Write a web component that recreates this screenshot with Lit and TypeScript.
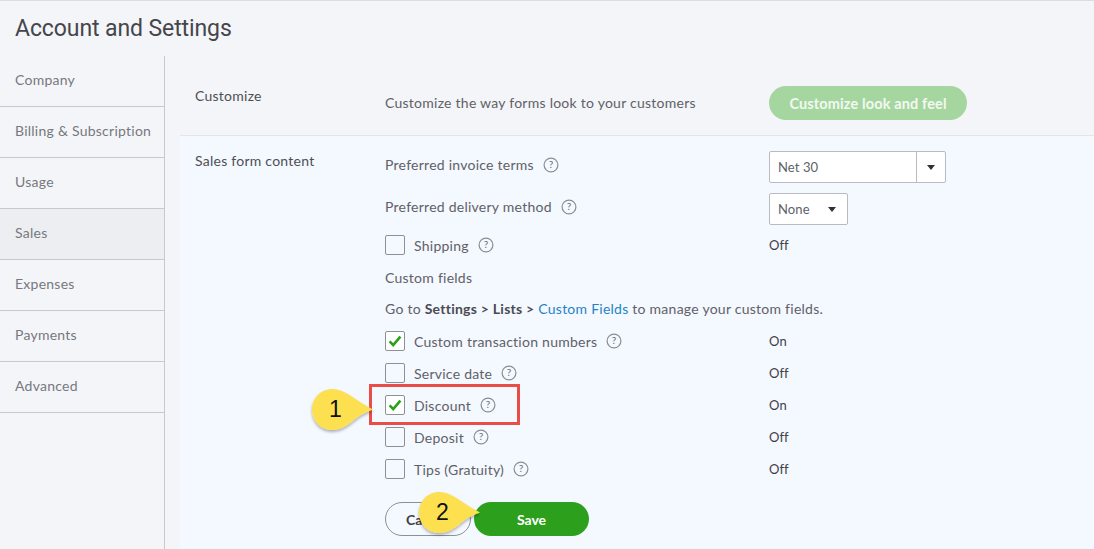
import { LitElement, html, css, svg } from "lit";
import { customElement } from "lit/decorators.js";

const nav = ["Company", "Billing & Subscription", "Usage", "Sales", "Expenses", "Payments", "Advanced"];

const help = html`<svg class="help" width="16" height="16" viewBox="0 0 16 16"><circle cx="8" cy="8" r="6.9" fill="none" stroke="#8b8e90" stroke-width="1.2"/><text x="8" y="11.4" text-anchor="middle" font-family="Lato, sans-serif" font-size="10" fill="#6b6c72">?</text></svg>`;

const callout = (n: string, cls: string) => html`<div class="callout ${cls}">
  <svg width="74" height="52" viewBox="0 0 74 52">
    <defs><filter id="s${n}" x="-20%" y="-20%" width="140%" height="150%"><feDropShadow dx="0" dy="2" stdDeviation="1.6" flood-color="#000" flood-opacity=".3"/></filter></defs>
    ${svg`<path d="M23 3 C31 3 38 7 45 12 C51 16 57 20 64 23.5 C57 26 51 29 45 34 C38 40 31 44 23 44 C12 44 3 35 3 23.5 C3 12 12 3 23 3 Z" fill="#fde04f" filter="url(#s${n})"/>`}
  </svg>
  <span>${n}</span>
</div>`;

@customElement("app-root")
export class AppRoot extends LitElement {
  static styles = css`
    :host { display: block; width: 1094px; height: 549px; overflow: hidden; background: #f4f5f8; font-family: Lato, "Open Sans", sans-serif; color: #4a4b52; font-size: 14px; position: relative; border-top: 1px solid #dcdde1; box-sizing: border-box; letter-spacing: .25px; }
    h1 { margin: 0; height: 55px; box-sizing: border-box; padding: 13px 0 0 15px; font: 400 23px/30px Roboto, sans-serif; letter-spacing: -.1px; color: #45464b; }
    .body { display: flex; height: 493px; }
    .side { width: 165px; flex: none; border-right: 1px solid #c8c9cc; box-sizing: border-box; }
    .side div { height: 51px; box-sizing: border-box; border-bottom: 1px solid #c8c9cc; padding: 0 0 3px 15px; display: flex; align-items: center; color: #77787e; }
    .side div.on { background: #eceef2; }
    .main { flex: 1; display: flex; flex-direction: column; padding-left: 15px; }
    .top { height: 79px; flex: none; display: grid; grid-template-columns: 205px 384px auto; border-bottom: 1px solid #e3e6e9; }
    .lab { padding-left: 15px; color: #4e4f55; }
    .top .lab { padding-top: 31px; line-height: 18px; }
    .top .desc { padding-top: 38px; line-height: 18px; color: #606167; }
    .cta { margin-top: 30px; width: 198px; height: 34px; border-radius: 17px; background: #a6d6a0; color: #f2f8f2; font-weight: 700; display: flex; align-items: center; justify-content: center; letter-spacing: .13px; font-size: 14.5px; box-sizing: border-box; }
    .sales { flex: 1; background: #f4f8ff; display: grid; grid-template-columns: 205px 384px 1fr; grid-auto-rows: max-content; }
    .sales > .lab { padding-top: 16px; line-height: 18px; grid-row: 1 / 20; }
    .rowl { display: flex; align-items: center; color: #606167; white-space: nowrap; grid-column: 2; box-sizing: border-box; }
    .rowr { display: flex; align-items: center; grid-column: 3; color: #3f4045; font-size: 13px; letter-spacing: .1px; box-sizing: border-box; }
    .help { margin-left: 9px; flex: none; }
    .box { width: 20px; height: 20px; box-sizing: border-box; border: 1px solid #8d9096; border-radius: 2px; margin-right: 9px; flex: none; display: flex; align-items: center; justify-content: center; }
    .box.chk { background: #fff; }
    .r1 { height: 57px; }
    .r1r { height: 57px; padding-top: 15px; align-items: flex-start; }
    .r2 { height: 33px; padding-bottom: 6px; }
    .r2r { height: 33px; align-items: flex-start; }
    .r3 { height: 40px; padding-bottom: 2px; }
    .r4 { height: 24px; grid-column: 2 / 4; padding-bottom: 2px; }
    .r5 { height: 35px; padding-top: 1px; grid-column: 2 / 4; }
    .h32 { height: 32px; }
    .sel { display: flex; background: #fff; border: 1px solid #b8bcc2; border-radius: 2px; height: 32px; box-sizing: border-box; align-items: center; font-size: 13px; color: #606167; }
    .sel .v { padding-left: 8px; }
    .net { width: 177px; }
    .net .v { width: 147px; height: 100%; display: flex; align-items: center; border-right: 1px solid #b8bcc2; box-sizing: border-box; }
    .net .a { flex: 1; display: flex; justify-content: center; }
    .none { width: 79px; justify-content: space-between; padding-right: 11px; }
    .tri { width: 0; height: 0; border-left: 4px solid transparent; border-right: 4px solid transparent; border-top: 5px solid #303136; }
    b { font-weight: 700; color: #4a4b52; }
    a { color: #1f84c6; text-decoration: none; }
    .btns { grid-column: 2; display: flex; margin-top: 17px; }
    .cancel { width: 86px; height: 34px; border: 1px solid #8d9096; border-radius: 17px; box-sizing: border-box; display: flex; align-items: center; padding-left: 20px; color: #3f4045; font-weight: 700; letter-spacing: 0; }
    .save { width: 115px; height: 34px; margin-left: 3px; border-radius: 17px; background: #2ca01c; color: #fff; font-weight: 700; display: flex; align-items: center; justify-content: center; letter-spacing: 0; }
    .red { position: absolute; left: 369px; top: 383px; width: 151px; height: 41px; box-sizing: border-box; border: 3px solid #ea4c48; }
    .callout { position: absolute; width: 74px; height: 52px; }
    .callout span { position: absolute; top: 7px; left: 3px; width: 47px; text-align: center; font: 400 23px/32px "Liberation Sans", sans-serif; color: #111; letter-spacing: 0; }
    .c1 { left: 309px; top: 385px; }
    .c2 { left: 416px; top: 488px; }
  `;

  check() {
    return html`<svg width="14" height="12" viewBox="0 0 14 12"><path d="M1.6 6.4 L5.2 10 L12.4 1.6" fill="none" stroke="#2ca01c" stroke-width="2.6"/></svg>`;
  }

  cb(label: string, state: string, on = false, cls = "h32") {
    return html`<div class="rowl ${cls}"><span class="box ${on ? "chk" : ""}">${on ? this.check() : ""}</span>${label}${help}</div><div class="rowr ${cls}">${state}</div>`;
  }

  render() {
    return html`
      <h1>Account and Settings</h1>
      <div class="body">
        <div class="side">${nav.map((n) => html`<div class=${n === "Sales" ? "on" : ""}>${n}</div>`)}</div>
        <div class="main">
          <div class="top">
            <div class="lab">Customize</div>
            <div class="desc">Customize the way forms look to your customers</div>
            <div class="cta">Customize look and feel</div>
          </div>
          <div class="sales">
            <div class="lab">Sales form content</div>
            <div class="rowl r1">Preferred invoice terms${help}</div>
            <div class="rowr r1r"><div class="sel net"><span class="v">Net 30</span><span class="a"><i class="tri"></i></span></div></div>
            <div class="rowl r2">Preferred delivery method${help}</div>
            <div class="rowr r2r"><div class="sel none"><span class="v">None</span><i class="tri"></i></div></div>
            ${this.cb("Shipping", "Off", false, "r3")}
            <div class="rowl r4">Custom fields</div>
            <div class="rowl r5">Go to&nbsp;<b>Settings &gt; Lists &gt;</b>&nbsp;<a>Custom Fields</a>&nbsp;to manage your custom fields.</div>
            ${this.cb("Custom transaction numbers", "On", true)}
            ${this.cb("Service date", "Off")}
            ${this.cb("Discount", "On", true)}
            ${this.cb("Deposit", "Off")}
            ${this.cb("Tips (Gratuity)", "Off")}
            <div class="btns"><div class="cancel">Cancel</div><div class="save">Save</div></div>
          </div>
        </div>
      </div>
      <div class="red"></div>
      ${callout("1", "c1")}
      ${callout("2", "c2")}
    `;
  }
}
